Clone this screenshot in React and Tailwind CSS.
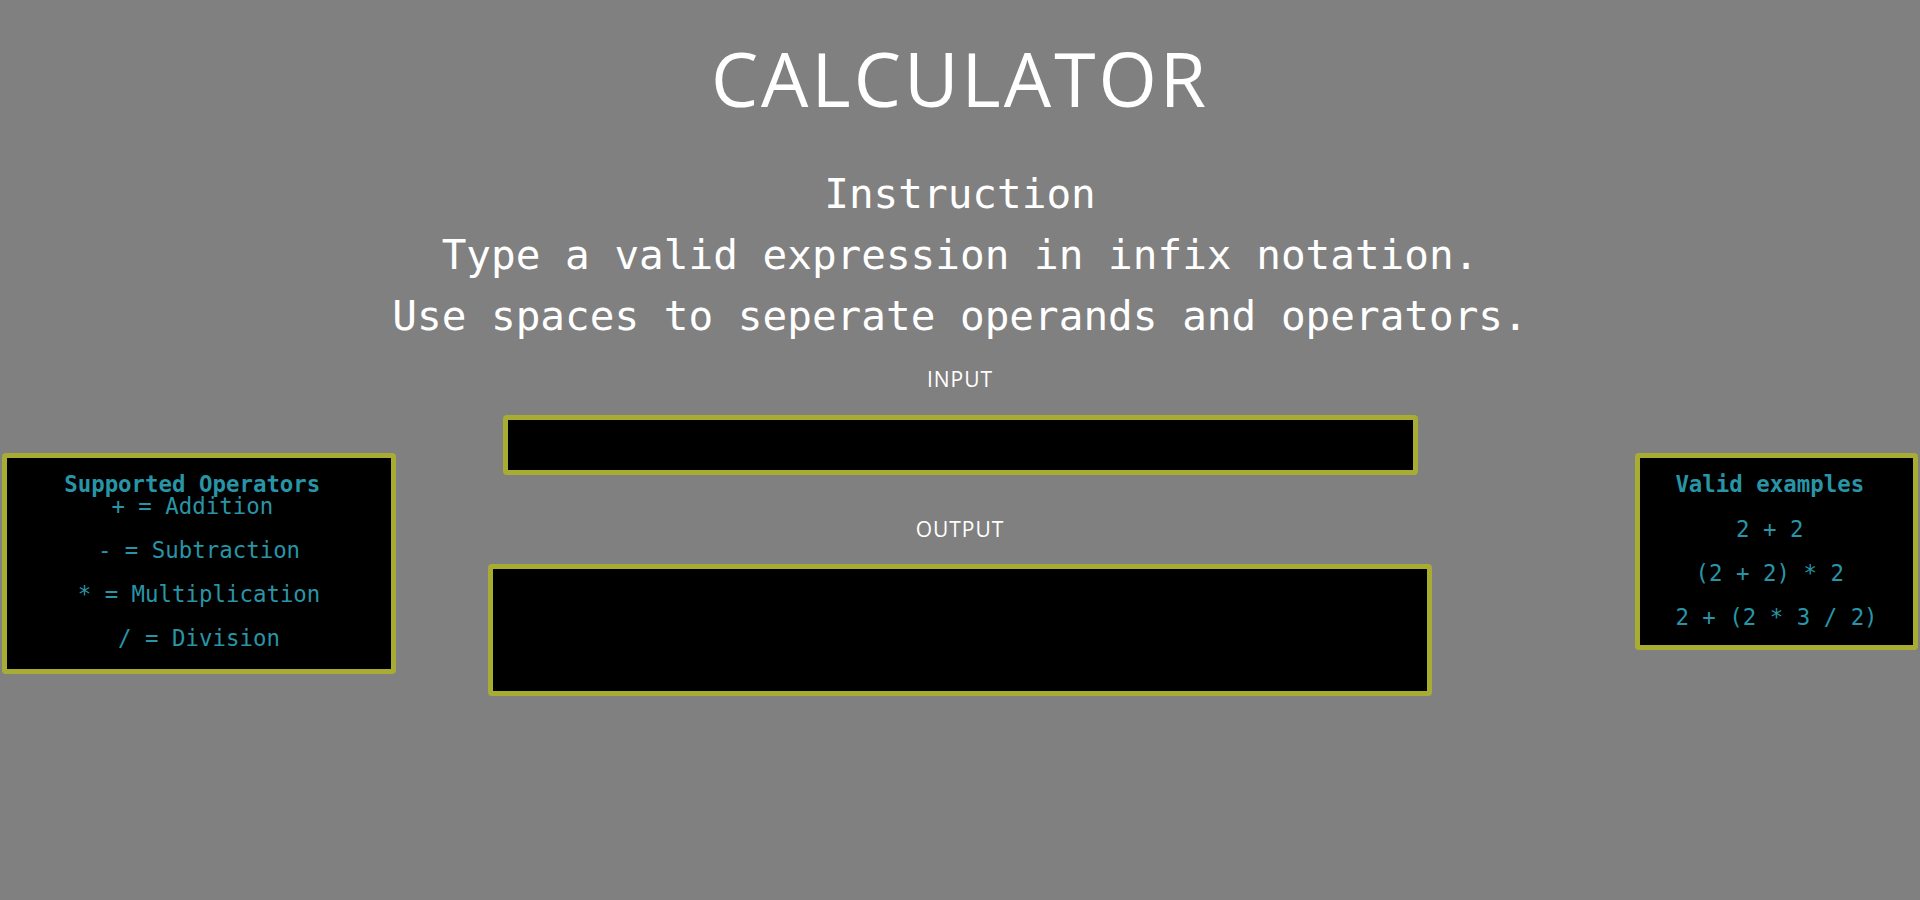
import React, { useState } from 'react';

const operators = ['+ = Addition\u00a0', '- = Subtraction', '* = Multiplication', '/ = Division'];
const examples = ['2 + 2\u00a0', '(2 + 2) * 2\u00a0', '2 + (2 * 3 / 2)'];

const mono = "font-['DejaVu_Sans_Mono','Liberation_Mono',monospace]";

export default function App() {
    const [expr, setExpr] = useState('');

    return (
        <div className="min-h-screen w-full bg-[#808080] text-white font-['Open_Sans','DejaVu_Sans',sans-serif]">
            {/* Header */}
            <h1 className="pt-[41px] text-center text-[75px] leading-none font-normal tracking-[3px]">CALCULATOR</h1>

            <div className={`mt-[48px] text-center text-[41px] leading-[61px] ${mono}`}>
                <h2>Instruction</h2>
                <p>Type a valid expression in infix notation.</p>
                <p>Use spaces to seperate operands and operators.</p>
            </div>

            {/* Main row */}
            <div className="mt-[19px] grid grid-cols-[1fr_944px_1fr] items-start">
                <div className="justify-self-start ml-[2px] mt-[87px] w-[394px] rounded-[4px] border-[5px] border-[#a8ac32] bg-black pt-[15px] pb-[20px] text-center text-[22.4px] leading-[22px] text-[#2895a6]">
                    <h3 className={`font-bold ${mono}`}>Supported Operators{'\u00a0'}</h3>
                    {operators.map((op, i) => (
                        <p key={op} className={`${mono} ${i > 0 ? 'mt-[22px]' : ''}`}>{op}</p>
                    ))}
                </div>

                <div className="flex flex-col items-center">
                    <label className="text-[21px] leading-[27px] tracking-[1px]">INPUT</label>
                    <input
                        type="text"
                        value={expr}
                        onChange={e => setExpr(e.target.value)}
                        className={`mt-[22px] h-[60px] w-[915px] rounded-[4px] border-[5px] border-[#a8ac32] bg-black px-3 text-[22px] text-[#2895a6] outline-none ${mono}`}
                    />
                    <label className="mt-[41px] text-[21px] leading-[27px] tracking-[1px]">OUTPUT</label>
                    <div className={`mt-[21px] h-[132px] w-[944px] rounded-[4px] border-[5px] border-[#a8ac32] bg-black ${mono}`}></div>
                </div>

                <div className="justify-self-end mr-[2px] mt-[87px] w-[283px] rounded-[4px] border-[5px] border-[#a8ac32] bg-black pt-[15px] pb-[17px] text-center text-[22.4px] leading-[22px] text-[#2895a6]">
                    <h3 className={`font-bold ${mono}`}>Valid examples{'\u00a0'}</h3>
                    {examples.map((ex, i) => (
                        <p key={ex} className={`${mono} ${i === 0 ? 'mt-[23px]' : 'mt-[22px]'}`}>{ex}</p>
                    ))}
                </div>
            </div>
        </div>
    );
}
